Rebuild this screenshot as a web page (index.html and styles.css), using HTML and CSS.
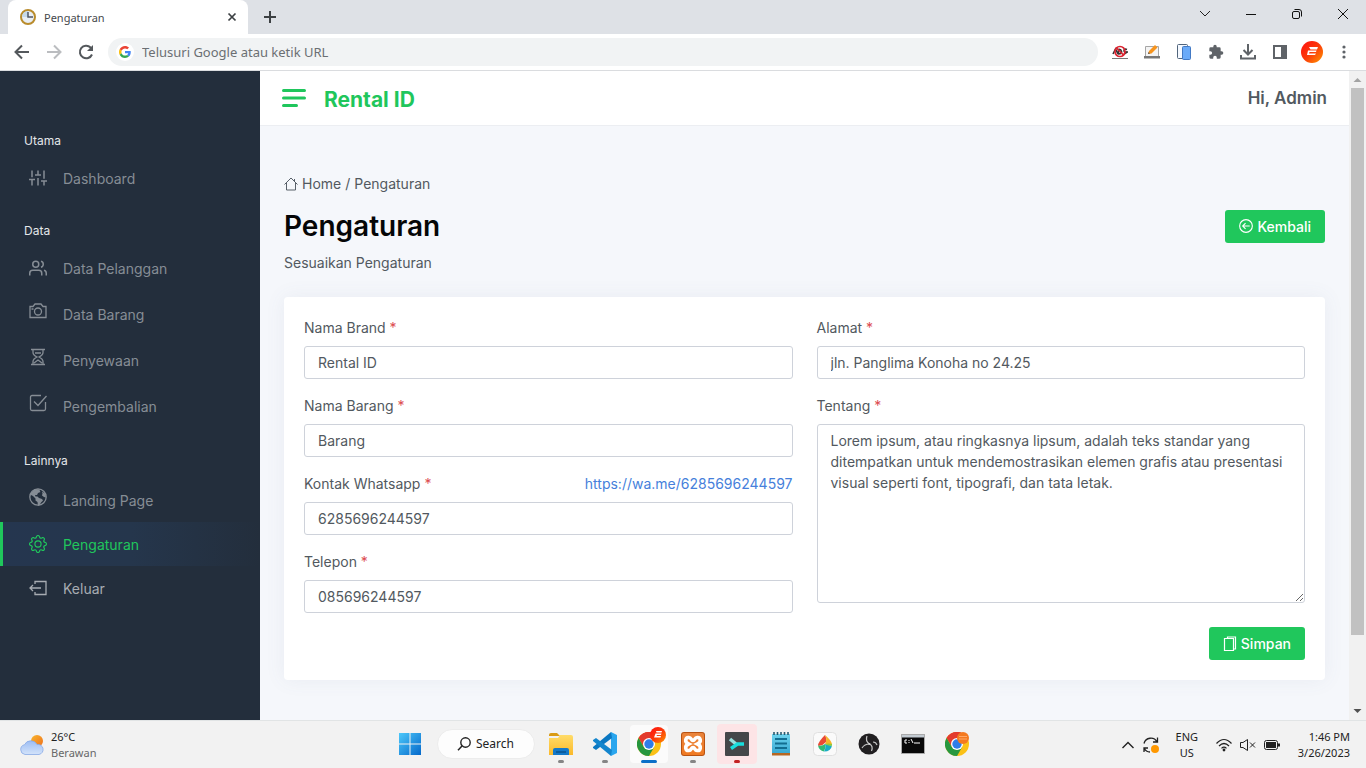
FILE: index.html
```html
<!DOCTYPE html>
<html lang="id">
<head>
<meta charset="utf-8">
<meta name="viewport" content="width=device-width, initial-scale=1">
<title>Pengaturan</title>
<link rel="stylesheet" href="styles.css">
</head>
<body>
<svg class="defs" width="0" height="0" aria-hidden="true">
  <defs>
    <linearGradient id="winBlue" x1="0" y1="0" x2="1" y2="1"><stop offset="0" stop-color="#4cc8fa"/><stop offset="1" stop-color="#0568ca"/></linearGradient>
    <linearGradient id="sun" x1="0" y1="0" x2="1" y2="1"><stop offset="0" stop-color="#f9b62c"/><stop offset="1" stop-color="#ee6f1c"/></linearGradient>
    <linearGradient id="cloud" x1="0" y1="0" x2="0" y2="1"><stop offset="0" stop-color="#9dbdf3"/><stop offset="1" stop-color="#d3e3fa"/></linearGradient>
    <linearGradient id="avatar" x1="0" y1="0" x2="1" y2="1"><stop offset="0" stop-color="#ff0f0f"/><stop offset=".5" stop-color="#fb3a0a"/><stop offset="1" stop-color="#ff9800"/></linearGradient>
    <linearGradient id="folder" x1="0" y1="0" x2="0" y2="1"><stop offset="0" stop-color="#ffdc69"/><stop offset="1" stop-color="#fbb92a"/></linearGradient>
    <linearGradient id="orange" x1="0" y1="0" x2="0" y2="1"><stop offset="0" stop-color="#e9843c"/><stop offset="1" stop-color="#f07a22"/></linearGradient>
    <linearGradient id="note" x1="0" y1="0" x2="0" y2="1"><stop offset="0" stop-color="#6fd4ee"/><stop offset="1" stop-color="#35a7d2"/></linearGradient>
    <symbol id="chrome" viewBox="0 0 24 24">
      <circle cx="12" cy="12" r="12" fill="#fbc116"/>
      <path d="M12 12 1.600 6A12 12 0 0 1 22.400 6z" fill="#e33b2e"/>
      <path d="M12 6h10.400A12 12 0 0 0 1.600 6L6.800 15z" fill="#e33b2e"/>
      <path d="M1.600 6A12 12 0 0 0 12 24L17.200 15 12 17.500 6.800 15z" fill="#27973f"/>
      <circle cx="12" cy="12" r="6" fill="#fff"/><circle cx="12" cy="12" r="4.700" fill="#2f7de9"/>
    </symbol>
  </defs>
</svg>

<header class="browser">
  <div class="tabstrip">
    <div class="tab">
      <svg width="16" height="16" viewBox="0 0 16 16"><circle cx="8" cy="8" r="7" fill="#e8eef5" stroke="#b98c2d" stroke-width="2"/><path d="M8 2v6H2A6 6 0 0 1 8 2z" fill="#c5d9ea"/><path d="M8 3v5h5" fill="none" stroke="#4f5564" stroke-width="1.500"/></svg>
      <span class="tab-title">Pengaturan</span>
      <button class="bare" aria-label="Tutup tab"><svg width="10" height="10" viewBox="0 0 10 10"><path d="m1.500 1.500 7 7m0-7-7 7" stroke="#3c4043" stroke-width="1.700"/></svg></button>
    </div>
    <button class="bare new-tab" aria-label="Tab baru"><svg width="12" height="12" viewBox="0 0 12 12"><path d="M6 0v12M0 6h12" stroke="#3c4043" stroke-width="2"/></svg></button>
    <div class="window-controls">
      <button class="bare" aria-label="Cari tab"><svg width="12" height="12" viewBox="0 0 12 12"><path d="m1 3 5 5 5-5" fill="none" stroke="#222"/></svg></button>
      <button class="bare" aria-label="Kecilkan"><svg width="12" height="12" viewBox="0 0 12 12"><path d="M1 6.500h10" stroke="#111"/></svg></button>
      <button class="bare" aria-label="Pulihkan"><svg width="12" height="12" viewBox="0 0 12 12"><rect x="1.500" y="3.500" width="7" height="7" rx="1.500" fill="none" stroke="#111"/><path d="M3.500 1.500H8a2.500 2.500 0 0 1 2.500 2.500v4.500" fill="none" stroke="#111"/></svg></button>
      <button class="bare" aria-label="Tutup"><svg width="12" height="12" viewBox="0 0 12 12"><path d="m1 1 10 10m0-10L1 11" stroke="#111"/></svg></button>
    </div>
  </div>
  <div class="toolbar">
    <button class="bare" aria-label="Kembali"><svg width="16" height="16" viewBox="0 0 16 16"><path d="M15 8H2m6-6.500L1.500 8 8 14.500" fill="none" stroke="#54585c" stroke-width="2"/></svg></button>
    <button class="bare" aria-label="Maju"><svg width="16" height="16" viewBox="0 0 16 16"><path d="M1 8h13M8 1.500 14.500 8 8 14.500" fill="none" stroke="#bbbdc0" stroke-width="2"/></svg></button>
    <button class="bare" aria-label="Muat ulang"><svg width="16" height="16" viewBox="0 0 16 16"><path d="M14 10.500A6.300 6.300 0 1 1 12.600 3.500L14 5" fill="none" stroke="#54585c" stroke-width="2"/><path d="M15 1v6H9z" fill="#54585c"/></svg></button>
    <label class="omnibox">
      <span class="g-badge"><svg width="12" height="12" viewBox="0 0 48 48"><path fill="#ea4335" d="M24 9.500c3.540 0 6.710 1.220 9.210 3.600l6.850-6.850C35.900 2.380 30.470 0 24 0 14.620 0 6.510 5.380 2.560 13.220l7.980 6.190C12.430 13.720 17.740 9.500 24 9.500z"/><path fill="#4285f4" d="M46.980 24.550c0-1.570-.15-3.090-.38-4.550H24v9.020h12.940c-.58 2.960-2.260 5.480-4.780 7.180l7.730 6c4.510-4.180 7.090-10.360 7.090-17.650z"/><path fill="#fbbc05" d="M10.530 28.590A14.500 14.500 0 0 1 9.770 24c0-1.600.27-3.140.76-4.590l-7.980-6.190A24 24 0 0 0 0 24c0 3.880.92 7.540 2.560 10.780z"/><path fill="#34a853" d="M24 48c6.480 0 11.930-2.130 15.890-5.810l-7.730-6c-2.150 1.450-4.920 2.300-8.160 2.300-6.260 0-11.570-4.220-13.470-9.910l-7.980 6.190C6.510 42.620 14.620 48 24 48z"/></svg></span>
      <input type="text" aria-label="Bilah alamat" placeholder="Telusuri Google atau ketik URL">
    </label>
    <div class="extensions">
      <button class="bare" aria-label="Pemblokir iklan"><svg width="16" height="16" viewBox="0 0 16 16"><path d="M1 10 3.500 5 6 10M6.500 5.500v4.500q3.500 0 3-2.500t-3-2zM15 5.500q-3-1-3 1t2.500 1.500T12 10" fill="none" stroke="#333" stroke-width="1.600"/><circle cx="8" cy="7.500" r="5" fill="none" stroke="#dc2430" stroke-width="1.700"/><path d="m4.500 4 7 7" stroke="#dc2430" stroke-width="1.700"/><path d="M0 14.500h16" stroke="#777"/></svg></button>
      <button class="bare" aria-label="Catatan"><svg width="16" height="16" viewBox="0 0 16 16"><path d="M1.500 12V2.500h13V12" fill="#f4f4f4" stroke="#a6a6a6"/><path d="M0 12h16v2.500H0z" fill="#777"/><path d="m4 10 1-3 6-6 2.500 2.500-6 6z" fill="#f7941d"/><path d="m4 10 .500-2 1.500 1.500z" fill="#555"/></svg></button>
      <button class="bare" aria-label="Tampilan seluler"><svg width="16" height="16" viewBox="0 0 16 16"><rect x="1.500" y=".500" width="10" height="14" rx="1" fill="#f5f9ff" stroke="#51657c"/><rect x="6.500" y="2.500" width="8" height="13" rx="1" fill="#6aaaf8" stroke="#4279c4"/></svg></button>
      <button class="bare" aria-label="Ekstensi"><svg width="16" height="16" viewBox="0 0 24 24"><path fill="#5f6368" d="M20.500 11H19V7a2 2 0 0 0-2-2h-4V3.500a2.500 2.500 0 0 0-5 0V5H4a2 2 0 0 0-2 2v3.800h1.500a2.700 2.700 0 0 1 0 5.400H2V20a2 2 0 0 0 2 2h3.800v-1.500a2.700 2.700 0 0 1 5.400 0V22H17a2 2 0 0 0 2-2v-4h1.500a2.500 2.500 0 0 0 0-5z"/></svg></button>
      <button class="bare" aria-label="Unduhan"><svg width="16" height="16" viewBox="0 0 16 16"><path d="M8 0v10M3.500 6 8 10.500 12.500 6M1 11v3.500h14V11" fill="none" stroke="#5f6368" stroke-width="2"/></svg></button>
      <button class="bare" aria-label="Panel samping"><svg width="16" height="16" viewBox="0 0 16 16"><path d="M1 1h14v14H1zM3 3v10h6V3z" fill="#5f6368" fill-rule="evenodd"/></svg></button>
      <button class="bare" aria-label="Profil"><svg width="22" height="22" viewBox="0 0 22 22"><circle cx="11" cy="11" r="11" fill="url(#avatar)"/><path d="M8 6h9l-1 2.500H9.500zM7 9.500h8.500l-.5 1.500H8.500l-.5 1.500h7L14 14H6z" fill="#fff"/></svg></button>
      <button class="bare" aria-label="Menu"><svg width="16" height="16" viewBox="0 0 16 16"><g fill="#5f6368"><circle cx="8" cy="3" r="1.600"/><circle cx="8" cy="8" r="1.600"/><circle cx="8" cy="13" r="1.600"/></g></svg></button>
    </div>
  </div>
</header>

<div class="app">
  <nav class="sidebar" aria-label="Menu utama">
    <section class="nav-group">
      <h2>Utama</h2>
      <a class="nav-item feather" href="#"><svg width="18" height="18" viewBox="0 0 24 24"><path d="M4 22v-7M4 11V2M12 22V12M12 8V2M20 22v-5M20 13V2M0 14h8M8 8h8M16 16h8"/></svg>Dashboard</a>
    </section>
    <section class="nav-group">
      <h2>Data</h2>
      <a class="nav-item feather" href="#"><svg width="18" height="18" viewBox="0 0 24 24"><path d="M17 22v-3a4 4 0 0 0-4-4H5a4 4 0 0 0-4 4v3M23 22v-3a4 4 0 0 0-3-3.870M16 3.130a4 4 0 0 1 0 7.750"/><circle cx="9" cy="7" r="4"/></svg>Data Pelanggan</a>
      <a class="nav-item raised" href="#"><svg width="18" height="18" viewBox="0 0 18 18"><path d="M1 4.500h3l2-2.500h6l2 2.500h3v11H1zM2.500 7h2"/><circle cx="9" cy="9.500" r="3.500"/></svg>Data Barang</a>
      <a class="nav-item raised" href="#"><svg width="18" height="18" viewBox="0 0 18 18"><path d="M2 1.500h14M2 16.500h14M4 2v2.500Q4 7 8 9q-4 2-4 4.500V16M14 2v2.500Q14 7 10 9q4 2 4 4.500V16M6 5h6M5 15l4-3 4 3"/></svg>Penyewaan</a>
      <a class="nav-item raised" href="#"><svg width="18" height="18" viewBox="0 0 18 18"><path d="M12 1.500H3A1.500 1.500 0 0 0 1.500 3v12A1.500 1.500 0 0 0 3 16.500h12a1.500 1.500 0 0 0 1.500-1.500V8M5 7.500l4 4L17.500 2"/></svg>Pengembalian</a>
    </section>
    <section class="nav-group compact">
      <h2>Lainnya</h2>
      <a class="nav-item raised" href="#"><svg width="18" height="18" viewBox="0 0 18 18"><circle cx="9" cy="9" r="8.200"/><path class="solid" d="M2 5 6 1l6 .500-1.500 1 1 1.500-2.500 1-1 2-2 0 .500 1.500 2 0 1.500 1.500 3 1 1 1.500-2 2-1.500 3-1.500.500-.500-4-2-1.500 0-2L4 8 2 7z M13 3.500l3 2 1 4-2-.500-2-1.500.500-2z"/></svg>Landing Page</a>
      <a class="nav-item active" href="#" aria-current="page"><svg width="18" height="18" viewBox="0 0 16 16"><path class="solid" d="M8 4.754a3.246 3.246 0 1 0 0 6.492 3.246 3.246 0 0 0 0-6.492zM5.754 8a2.246 2.246 0 1 1 4.492 0 2.246 2.246 0 0 1-4.492 0z"/><path class="solid" d="M9.796 1.343c-.527-1.790-3.065-1.790-3.592 0l-.094.319a.873.873 0 0 1-1.255.52l-.292-.16c-1.640-.892-3.433.902-2.540 2.541l.159.292a.873.873 0 0 1-.52 1.255l-.319.094c-1.790.527-1.790 3.065 0 3.592l.319.094a.873.873 0 0 1 .52 1.255l-.16.292c-.892 1.640.901 3.434 2.541 2.540l.292-.159a.873.873 0 0 1 1.255.52l.094.319c.527 1.790 3.065 1.790 3.592 0l.094-.319a.873.873 0 0 1 1.255-.52l.292.16c1.640.893 3.434-.902 2.540-2.541l-.159-.292a.873.873 0 0 1 .52-1.255l.319-.094c1.790-.527 1.790-3.065 0-3.592l-.319-.094a.873.873 0 0 1-.52-1.255l.16-.292c.893-1.640-.902-3.433-2.541-2.540l-.292.159a.873.873 0 0 1-1.255-.52l-.094-.319zm-2.633.283c.246-.835 1.428-.835 1.674 0l.094.319a1.873 1.873 0 0 0 2.693 1.115l.291-.16c.764-.415 1.600.42 1.184 1.185l-.159.292a1.873 1.873 0 0 0 1.116 2.692l.318.094c.835.246.835 1.428 0 1.674l-.319.094a1.873 1.873 0 0 0-1.115 2.693l.16.291c.415.764-.42 1.600-1.185 1.184l-.291-.159a1.873 1.873 0 0 0-2.693 1.116l-.094.318c-.246.835-1.428.835-1.674 0l-.094-.319a1.873 1.873 0 0 0-2.692-1.115l-.292.16c-.764.415-1.600-.42-1.184-1.185l.159-.291A1.873 1.873 0 0 0 1.945 8.930l-.319-.094c-.835-.246-.835-1.428 0-1.674l.319-.094A1.873 1.873 0 0 0 3.060 4.377l-.16-.292c-.415-.764.42-1.600 1.185-1.184l.292.159a1.873 1.873 0 0 0 2.692-1.115l.094-.319z"/></svg>Pengaturan</a>
      <a class="nav-item bright" href="#"><svg width="18" height="18" viewBox="0 0 18 18"><path d="M6 5V2.500h11v13H6V13M12 9H1M4 6 1 9l3 3"/></svg>Keluar</a>
    </section>
  </nav>

  <div class="page">
    <div class="topbar">
      <button class="bare" aria-label="Buka menu"><svg width="24" height="18" viewBox="0 0 24 18"><path d="M1.500 1.500h21M1.500 9h21M1.500 16.500h13" stroke="#1fc65c" stroke-width="3" stroke-linecap="round"/></svg></button>
      <a class="brand" href="#">Rental ID</a>
      <span class="greeting">Hi, Admin</span>
    </div>
    <main class="content">
      <div class="breadcrumb">
        <svg width="14" height="14" viewBox="0 0 14 14"><path d="M.500 7.500 7 1l6.500 6.500M2.500 6v7h9V6M10.500 4V2" fill="none" stroke="#586069"/></svg>
        <a href="#">Home</a> / <span>Pengaturan</span>
      </div>
      <div class="heading">
        <h1>Pengaturan</h1>
        <a class="btn" href="#"><svg width="14" height="14" viewBox="0 0 15 15"><circle cx="7.500" cy="7.500" r="6.800"/><path d="M11.500 7.500h-7M7 4.500l-3 3 3 3"/></svg>Kembali</a>
      </div>
      <p class="subtitle">Sesuaikan Pengaturan</p>
      <form class="card">
        <div class="column">
          <div class="field"><div class="label-row"><label for="brand">Nama Brand <b>*</b></label></div><input id="brand" type="text" value="Rental ID"></div>
          <div class="field"><div class="label-row"><label for="item">Nama Barang <b>*</b></label></div><input id="item" type="text" value="Barang"></div>
          <div class="field"><div class="label-row"><label for="wa">Kontak Whatsapp <b>*</b></label><a href="#">https://wa.me/6285696244597</a></div><input id="wa" type="text" value="6285696244597"></div>
          <div class="field"><div class="label-row"><label for="phone">Telepon <b>*</b></label></div><input id="phone" type="text" value="085696244597"></div>
        </div>
        <div class="column">
          <div class="field"><div class="label-row"><label for="address">Alamat <b>*</b></label></div><input id="address" type="text" value="jln. Panglima Konoha no 24.25"></div>
          <div class="field"><div class="label-row"><label for="about">Tentang <b>*</b></label></div><textarea id="about">Lorem ipsum, atau ringkasnya lipsum, adalah teks standar yang ditempatkan untuk mendemostrasikan elemen grafis atau presentasi visual seperti font, tipografi, dan tata letak.</textarea></div>
          <button class="btn save" type="button"><svg width="14" height="15" viewBox="0 0 14 15"><path d="M4.500 2V1h8v12h-2M1.500 2.500h9v12h-9z"/></svg>Simpan</button>
        </div>
      </form>
    </main>
  </div>

  <div class="scrollbar" aria-hidden="true">
    <svg width="17" height="17" viewBox="0 0 17 17"><path d="m4.500 11 4-4 4 4z" fill="#a3a3a3"/></svg>
    <div class="track"><div class="thumb"></div></div>
    <svg width="17" height="17" viewBox="0 0 17 17"><path d="m4.500 6 4 4 4-4z" fill="#505050"/></svg>
  </div>
</div>

<footer class="taskbar">
  <div class="weather">
    <svg width="24" height="24" viewBox="0 0 24 24"><circle cx="17" cy="8" r="6" fill="url(#sun)"/><path d="M5 21.500a5 5 0 0 1-.500-9.800A7 7 0 0 1 17 11.500a5 5 0 0 1 2 10z" fill="url(#cloud)" stroke="#88a9e6" stroke-width=".8"/></svg>
    <div><div>26°C</div><div class="muted">Berawan</div></div>
  </div>
  <div class="dock">
    <button class="app-slot" aria-label="Mulai"><svg width="24" height="24" viewBox="0 0 24 24"><path d="M1 1h10.500v10.500H1zM12.500 1H23v10.500H12.500zM1 12.500h10.500V23H1zM12.500 12.500H23V23H12.500z" fill="url(#winBlue)"/></svg></button>
    <button class="search"><svg width="14" height="14" viewBox="0 0 14 14"><circle cx="8.500" cy="5.500" r="4.700" fill="none" stroke="#222" stroke-width="1.400"/><path d="M5 9 1 13.200" stroke="#222" stroke-width="1.500"/></svg>Search</button>
    <button class="app-slot running" aria-label="File Explorer"><svg width="24" height="24" viewBox="0 0 24 24"><path d="M0 3a2 2 0 0 1 2-2h6l3 3H0z" fill="#d99a13"/><path d="M0 6h9l2-3h11a2 2 0 0 1 2 2v18H0z" fill="url(#folder)"/><path d="M4 23v-5a2 2 0 0 1 2-2h12a2 2 0 0 1 2 2v5z" fill="#1479c9"/><path d="M7 19h10v2H7z" fill="#0b5d9f"/></svg></button>
    <button class="app-slot running" aria-label="Visual Studio Code"><svg width="24" height="24" viewBox="0 0 24 24"><path d="M18 0 24 3v18l-6 3z" fill="#2aa6ee"/><path d="m18 0 1 6L3 18 0 16v-1z" fill="#0b78c2"/><path d="m18 24 1-6L3 6 0 8v1z" fill="#1385cd"/></svg></button>
    <button class="app-slot focused" aria-label="Chrome"><svg width="38" height="38" viewBox="0 0 38 38"><use href="#chrome" x="7" y="7" width="24" height="24"/><circle cx="28" cy="10" r="8" fill="url(#avatar)"/><path d="M26 6h6l-.5 1.500h-5zM25.500 8.500h6L31 10h-4l-.5 1H31l-.5 1.500H24z" fill="#fff"/></svg></button>
    <button class="app-slot running" aria-label="XAMPP"><svg width="24" height="24" viewBox="0 0 24 24"><rect width="24" height="24" rx="3" fill="#b95312"/><rect x="1" y="1" width="22" height="22" rx="2" fill="url(#orange)"/><path d="M7.500 12C3 10 4.500 5 8 5.500c2.500 0 2 3 4 3s1.500-3 4-3c3.500-.5 5 4.500.5 6.500 4.500 2 3 7-.5 6.500-2.500 0-2-3-4-3s-1.500 3-4 3C4.500 19 3 14 7.500 12z" fill="none" stroke="#fff" stroke-width="3.600"/></svg></button>
    <button class="app-slot alert" aria-label="Terminal"><svg width="24" height="24" viewBox="0 0 24 24"><rect width="24" height="24" rx="1" fill="#454749"/><path d="m5 7 6 5" fill="none" stroke="#98dfdc" stroke-width="3.500"/><path d="M19 12h-6.500L6 16.500" fill="none" stroke="#18dedd" stroke-width="3.500"/></svg></button>
    <button class="app-slot" aria-label="Notepad"><svg width="24" height="24" viewBox="0 0 24 24"><path d="M3 2h18v20H3z" fill="url(#note)"/><path d="M3 21h18v2.500H3z" fill="#b66722"/><path d="M6 7h12M6 11.500h12M6 16h12" stroke="#126e91" stroke-width="1.800"/><path d="M5 0v3m3.500-3v3M12 0v3m3.500-3v3M19 0v3" stroke="#295b70" stroke-width="1.600"/></svg></button>
    <button class="app-slot" aria-label="Editor warna"><svg width="24" height="24" viewBox="0 0 24 24"><rect x=".500" y=".500" width="23" height="23" rx="4" fill="#fafafa" stroke="#e0e0e0"/><path d="M12 3q-7 7-7 10.500 4 1 8-3.500 1-4-1-7z" fill="#e94a35"/><path d="M12 3q2 3 1 7l-1 2q4 1 7 0-1-4-7-9z" fill="#f6b42a"/><path d="M5 13.500q4 1 7-1.500 1 4-1 7.500-5-1-6-6z" fill="#31ba74"/><path d="M12 12q4 1 7 1.500-1 6-8 6 2-3 1-7.500z" fill="#19adc4"/><path d="M12 12q3-1 7 0v1.500q-3 1-7-1.500z" fill="#92cb38"/></svg></button>
    <button class="app-slot" aria-label="OBS"><svg width="22" height="22" viewBox="0 0 22 22"><circle cx="11" cy="11" r="10.500" fill="#211f21"/><path d="M9 3q-2 5 2.500 8M11.500 11q-5 0-7.500 4M11.500 11q4 2 2 7M15 9q3 0 4 3" fill="none" stroke="#c4c4c4" stroke-width="1.200"/><circle cx="11.500" cy="11" r="1" fill="#d4d4d4"/></svg></button>
    <button class="app-slot" aria-label="Command Prompt"><svg width="24" height="20" viewBox="0 0 24 20"><path d="M.500.500h23v19H.500z" fill="#090909" stroke="#aaa"/><path d="M1 1h22v2.500H1z" fill="#c3cbd2"/><path d="M6 6H4v3h2M8 6v1m0 1v1M10 5l2 4M13 9h6" fill="none" stroke="#fff"/></svg></button>
    <button class="app-slot" aria-label="Chrome profil kedua"><svg width="24" height="24" viewBox="0 0 24 24"><use href="#chrome" width="24" height="24"/><circle cx="18" cy="6" r="6" fill="#f47a20"/><path d="M14 4.500h8M14 7h8" stroke="#ffa868"/></svg></button>
  </div>
  <div class="tray">
    <svg width="12" height="12" viewBox="0 0 12 12"><path d="m.500 9 5.500-5.500L11.500 9" fill="none" stroke="#222" stroke-width="1.400"/></svg>
    <svg width="18" height="18" viewBox="0 0 18 18"><path d="M2 7.500A7 7 0 0 1 15 6M15.500 1.500V6H11M2 16v-4h4M2 12q2 4 6 4" fill="none" stroke="#222" stroke-width="1.300"/><circle cx="13" cy="13" r="4" fill="#ff9800"/></svg>
    <div class="lang"><div>ENG</div><div>US</div></div>
    <svg width="16" height="14" viewBox="0 0 16 14"><path d="M.500 5.500q7.500-8 15 0M3 8q5-5 10 0M5.500 10.300q2.500-2.500 5 0" fill="none" stroke="#222" stroke-width="1.200"/><circle cx="8" cy="12" r="1.400" fill="#222"/></svg>
    <svg width="16" height="12" viewBox="0 0 16 12"><path d="M.500 3.500H3L7.500.500v11L3 8.500H.500zM10 3.500l5 5m0-5-5 5" fill="none" stroke="#222"/></svg>
    <svg width="16" height="12" viewBox="0 0 16 12"><rect x=".500" y="1.500" width="13" height="9" rx="2" fill="none" stroke="#222"/><path d="M2 3h10v6H2zM14 4.500h2v3h-2z" fill="#222"/></svg>
    <div class="clock"><div>1:46 PM</div><div>3/26/2023</div></div>
  </div>
</footer>
</body>
</html>
```
FILE: styles.css
```css
* { box-sizing: border-box; }

body {
  margin: 0;
  height: 100vh;
  display: flex;
  flex-direction: column;
  overflow: hidden;
  font: 14px/21px Inter, "Liberation Sans", sans-serif;
  color: #525960;
}

svg { display: block; flex: none; }
.defs { position: absolute; }
a { color: inherit; text-decoration: none; }
h1, h2, p { margin: 0; }
input, textarea, button { font: inherit; color: inherit; }

.bare {
  display: grid;
  place-items: center;
  padding: 0;
  border: 0;
  background: none;
}

/* Browser frame */
.browser { font-family: "Noto Sans", sans-serif; border-bottom: 1px solid #dadcdf; }

.tabstrip {
  display: flex;
  height: 34px;
  padding-left: 8px;
  background: #dee1e6;
}

.tab {
  display: flex;
  align-items: center;
  gap: 8px;
  width: 240px;
  padding: 0 11px 0 12px;
  border-radius: 8px 8px 0 0;
  background: #fff;
  font-size: 11px;
  color: #45494d;
}

.tab-title { flex: 1; }
.new-tab { margin-left: 16px; }
.window-controls { display: flex; margin-left: auto; height: 28px; }
.window-controls button { width: 46px; }

.toolbar {
  display: flex;
  align-items: center;
  height: 36px;
  padding: 0 14px;
  gap: 16px;
}

.omnibox {
  display: flex;
  align-items: center;
  flex: 1;
  gap: 8px;
  height: 28px;
  margin-left: -2px;
  padding: 0 8px;
  border-radius: 14px;
  background: #f1f3f4;
}

.g-badge {
  display: grid;
  place-items: center;
  width: 18px;
  height: 18px;
  border-radius: 50%;
  background: #fff;
}

.omnibox input {
  flex: 1;
  min-width: 0;
  padding: 0;
  border: 0;
  outline: 0;
  background: none;
  font-size: 13px;
}
.omnibox input::placeholder { color: #6b6f73; opacity: 1; }

.extensions { display: flex; align-items: center; margin: 0 -8px 0 -10px; }
.extensions button { width: 32px; }

/* Application */
.app { display: flex; flex: 1; min-height: 0; }

.sidebar {
  display: flex;
  flex-direction: column;
  gap: 21px;
  width: 260px;
  padding-top: 61px;
  background: #232e3c;
  color: #868d95;
}

.nav-group h2 {
  margin: 0 24px 5px;
  font-size: 12px;
  line-height: 18px;
  font-weight: 400;
  color: #e4e7ea;
}

.nav-item {
  display: flex;
  align-items: center;
  gap: 16px;
  height: 46px;
  padding-left: 26px;
  border-left: 3px solid transparent;
}

.nav-item svg { fill: none; stroke: currentColor; stroke-width: 1.300; }
.nav-item svg .solid { fill: currentColor; stroke: none; }
.feather svg { stroke-width: 2; }
.raised svg { margin-bottom: 6px; }
.compact { padding-top: 2px; }
.compact h2 { margin-bottom: 8px; }
.compact .nav-item { height: 44px; }
.bright { color: #a7acb2; }

.nav-item.active {
  border-color: #20c75c;
  background: linear-gradient(90deg, #25364f 0%, #25364c 50%, #232e3c 100%);
  color: #20c75c;
}

.page { display: flex; flex-direction: column; flex: 1; min-width: 0; background: #f5f7fb; }

.topbar {
  display: flex;
  align-items: center;
  gap: 18px;
  height: 55px;
  padding: 0 22px;
  border-bottom: 1px solid #eceef2;
  background: #fff;
}

.brand { padding-top: 3px; font-size: 21px; line-height: 28px; font-weight: 700; color: #1fc65c; }
.greeting { margin-left: auto; font-size: 17px; font-weight: 600; }

.content { padding: 47px 24px 40px; }
.breadcrumb { display: flex; align-items: center; gap: 4px; }

.heading {
  display: flex;
  align-items: center;
  justify-content: space-between;
  margin-top: 14px;
}
.heading h1 { font-size: 28px; line-height: 36px; font-weight: 600; color: #050607; }

.subtitle { margin: 8px 0 24px; }

.btn {
  display: flex;
  align-items: center;
  gap: 4px;
  height: 33px;
  padding: 0 14px;
  border: 0;
  border-radius: 3px;
  background: #20c75c;
  color: #fff;
  font-weight: 500;
}
.btn svg { fill: none; stroke: currentColor; stroke-width: 1.200; }
.save { align-self: flex-end; margin-top: 8px; }

.card {
  display: grid;
  grid-template-columns: 1fr 1fr;
  gap: 24px;
  padding: 20px;
  border-radius: 4px;
  background: #fff;
  box-shadow: 0 0 20px rgba(90, 105, 140, .08);
}

.column { display: flex; flex-direction: column; gap: 16px; }
.field { display: flex; flex-direction: column; gap: 8px; }
.label-row { display: flex; justify-content: space-between; }
.label-row b { font-weight: 400; color: #dc4b50; }
.label-row a { color: #467fdb; }

.field input, .field textarea {
  width: 100%;
  padding: 0 13px;
  border: 1px solid #ced2da;
  border-radius: 3px;
  outline: 0;
  background: #fff;
}
.field input { height: 33px; }
.field textarea { height: 179px; padding: 5px 13px; resize: vertical; }

.scrollbar {
  display: flex;
  flex-direction: column;
  width: 17px;
  background: #f1f1f1;
}
.track { flex: 1; padding: 0 2px; }
.thumb { height: 89%; background: #c1c1c1; }

/* Taskbar */
.taskbar {
  display: grid;
  grid-template-columns: 1fr auto 1fr;
  align-items: center;
  height: 48px;
  border-top: 1px solid #e1e4e5;
  background: #f2f2f2;
  font: 11px/16px "Noto Sans", sans-serif;
  color: #222;
}

.weather { display: flex; align-items: center; gap: 7px; padding-left: 20px; }
.muted { color: #686868; }
.dock { display: flex; align-items: center; padding-bottom: 1px; }

.app-slot {
  position: relative;
  display: grid;
  place-items: center;
  width: 44px;
  height: 46px;
  padding: 0;
  border: 0;
  background: none;
}

/* Running marks lie over the lower edge of each slot */
.running::after, .focused::after, .alert::after {
  content: "";
  position: absolute;
  bottom: 4px;
  left: 50%;
  width: 6px;
  height: 3px;
  border-radius: 2px;
  background: #858585;
  transform: translateX(-50%);
}
.focused::after { width: 16px; background: #0b6fc8; }
.alert::after { background: #c22222; }
.focused svg { border-radius: 4px; background: #fbfbfb; }
.alert svg { box-sizing: content-box; padding: 8px; border-radius: 4px; background: #fde4e6; }

.search {
  display: flex;
  align-items: center;
  justify-content: center;
  gap: 5px;
  width: 98px;
  height: 30px;
  margin: 0 4px 0 5px;
  padding: 0;
  border: 1px solid #ececec;
  border-radius: 15px;
  background: #fdfdfd;
  font-size: 12px;
}

.tray {
  display: flex;
  align-items: center;
  justify-content: flex-end;
  gap: 8px;
  padding-right: 16px;
}
.lang { width: 30px; margin: 0 6px 0 4px; text-align: center; }
.clock { margin-left: 10px; text-align: right; }
```
